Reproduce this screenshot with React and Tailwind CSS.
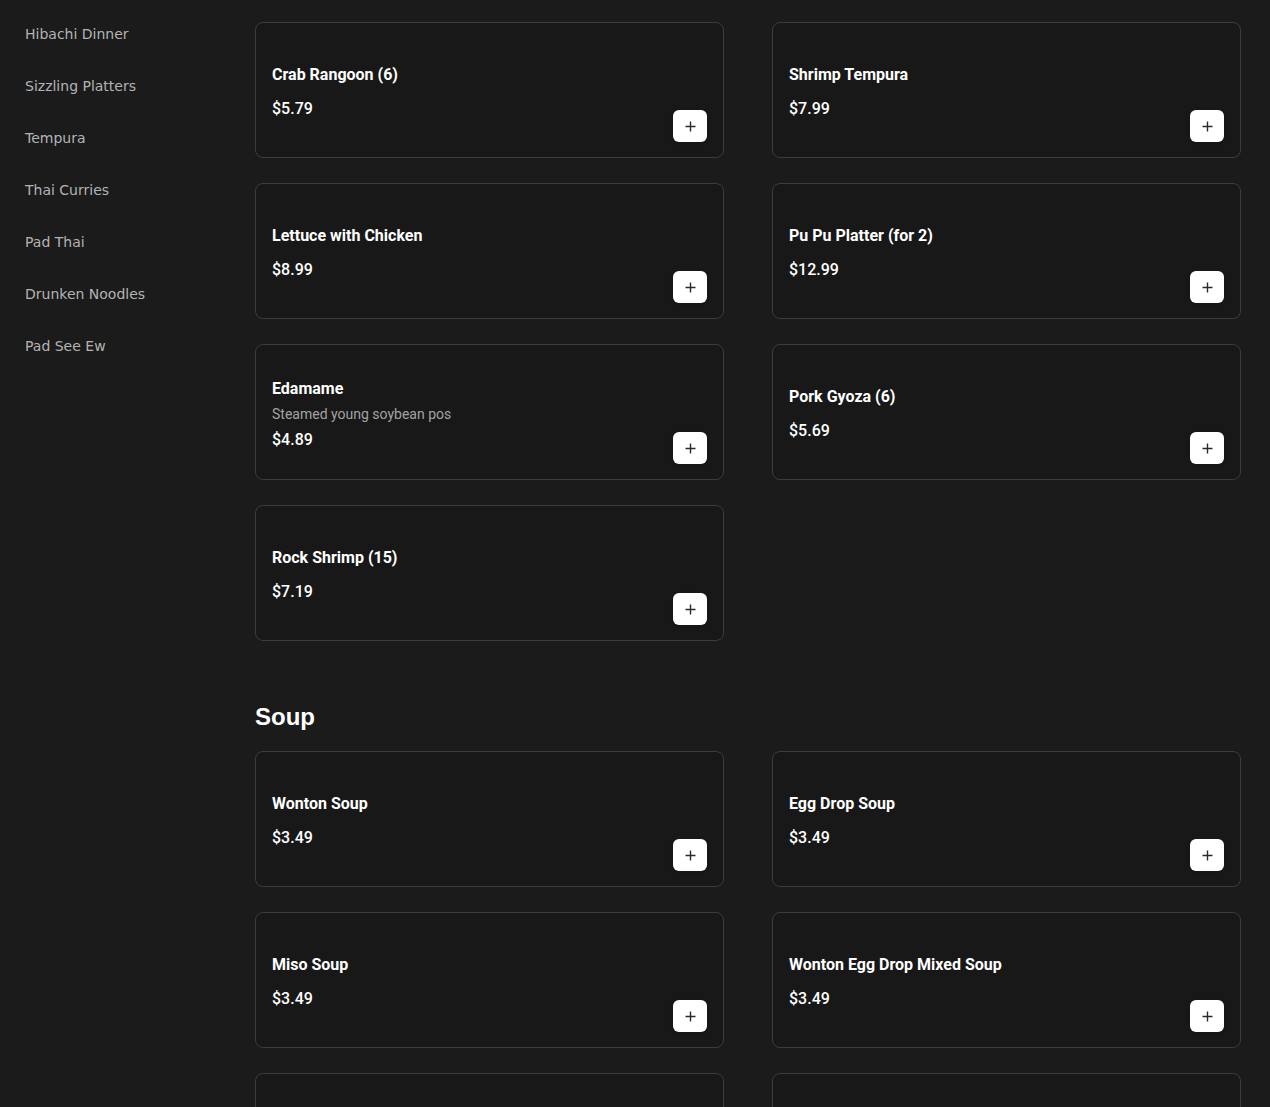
const categories = [
  "Hibachi Dinner",
  "Sizzling Platters",
  "Tempura",
  "Thai Curries",
  "Pad Thai",
  "Drunken Noodles",
  "Pad See Ew",
];

const appetizers = [
  { name: "Crab Rangoon (6)", price: "$5.79" },
  { name: "Shrimp Tempura", price: "$7.99" },
  { name: "Lettuce with Chicken", price: "$8.99" },
  { name: "Pu Pu Platter (for 2)", price: "$12.99" },
  { name: "Edamame", desc: "Steamed young soybean pos", price: "$4.89" },
  { name: "Pork Gyoza (6)", price: "$5.69" },
  { name: "Rock Shrimp (15)", price: "$7.19" },
];

const soups = [
  { name: "Wonton Soup", price: "$3.49" },
  { name: "Egg Drop Soup", price: "$3.49" },
  { name: "Miso Soup", price: "$3.49" },
  { name: "Wonton Egg Drop Mixed Soup", price: "$3.49" },
  { name: "Hot & Sour Soup", price: "$3.49" },
  { name: "Tom Yum Soup", price: "$4.99" },
];

function ItemCard({ item }) {
  return (
    <div className="h-[136px] rounded-lg border border-[#3c3c3c] bg-[#181818] px-4 py-[15px] flex">
      <div className="flex-1 flex flex-col justify-center pt-[4px]">
        <div className="text-[16px] leading-6 font-bold text-white">
          {item.name}
        </div>
        {item.desc ? (
          <div className="mt-[3px] text-[14px] leading-5 text-[#a3a3a3]">
            {item.desc}
          </div>
        ) : null}
        <div
          className={`${
            item.desc ? "mt-[4px]" : "mt-[10px]"
          } text-[16px] leading-6 font-medium text-white`}
        >
          {item.price}
        </div>
      </div>
      <button className="self-end w-[34px] h-[32px] rounded-md bg-white flex items-center justify-center shadow">
        <svg width="11" height="11" viewBox="0 0 11 11">
          <path d="M5.5 0.5v10M0.5 5.5h10" stroke="#2b2b2b" strokeWidth="1.4" />
        </svg>
      </button>
    </div>
  );
}

export default function App() {
  return (
    <div
      className="bg-[#1b1b1b] min-h-screen h-[1107px] overflow-hidden flex"
      style={{ fontFamily: "Roboto, sans-serif" }}
    >
      {/* Sidebar */}
      <div
        className="w-[255px] shrink-0 pt-2 pl-[25px]"
        style={{ fontFamily: "'DejaVu Sans', sans-serif" }}
      >
        {categories.map((c) => (
          <div key={c} className="py-4 text-[14px] leading-5 text-[#b3b3b3]">
            {c}
          </div>
        ))}
      </div>

      {/* Menu */}
      <div className="w-[986px] pt-[22px]">
        <div className="grid grid-cols-2 gap-x-[48px] gap-y-[25px]">
          {appetizers.map((item) => (
            <ItemCard key={item.name} item={item} />
          ))}
        </div>

        <h2
          className="mt-[60px] mb-[18px] text-[24px] leading-8 font-bold text-white"
          style={{ fontFamily: "'Liberation Sans', Arial, sans-serif" }}
        >
          Soup
        </h2>
        <div className="grid grid-cols-2 gap-x-[48px] gap-y-[25px]">
          {soups.map((item) => (
            <ItemCard key={item.name} item={item} />
          ))}
        </div>
      </div>
    </div>
  );
}
